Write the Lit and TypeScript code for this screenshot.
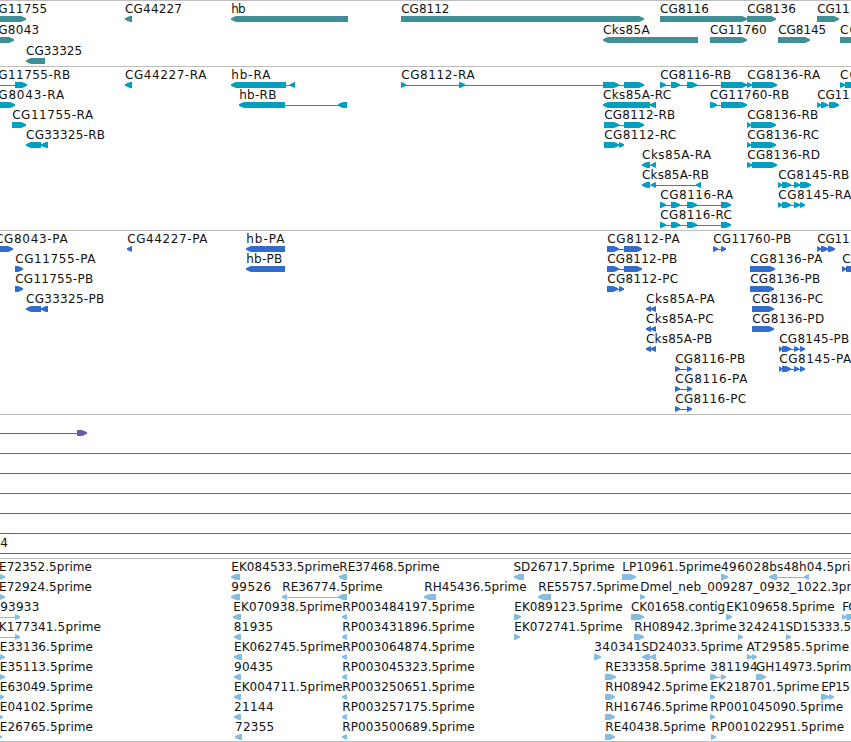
import { LitElement, html, svg, css } from 'lit';
import { customElement, property } from 'lit/decorators.js';

type Dir = 'L' | 'R';

// row, label, label left, label right, direction, blocks as [start, end] pairs
type Feature = [number, string, number, number, Dir, number[][]];

interface Track {
  name: string;
  height: number;
  pitch: number;
  features: Feature[];
}

const RP: number[][] = [[342, 347]];

const TRACKS: Track[] = [
  {
    name: 'gene',
    height: 66,
    pitch: 21,
    features: [
      [0, 'G11755', -1, 46.5, 'R', [[-5, 26]]],
      [1, 'G8043', -1, 38.5, 'R', [[-5, 14]]],
      [2, 'CG33325', 26.7, 81.5, 'L', [[26, 45]]],
      [0, 'CG44227', 125.7, 181.3, 'L', [[125, 132]]],
      [0, 'hb', 231.9, 245, 'L', [[231, 348]]],
      [0, 'CG8112', 401.9, 448.7, 'R', [[401, 644]]],
      [1, 'Cks85A', 603.7, 649, 'L', [[603, 698]]],
      [0, 'CG8116', 660.7, 708.3, 'R', [[660, 747]]],
      [1, 'CG11760', 710.7, 766, 'R', [[710, 747]]],
      [0, 'CG8136', 747.9, 795.3, 'R', [[747, 776]]],
      [1, 'CG8145', 778.9, 825.5, 'R', [[778, 810]]],
      [0, 'CG11', 817.9, 849, 'R', [[817, 839]]],
      [1, 'CG', 840.7, 858, 'R', [[840, 870]]],
    ],
  },
  {
    name: 'mrna',
    height: 164,
    pitch: 20,
    features: [
      [0, 'G11755-RB', -1, 69.5, 'R', [[-15, -8], [15, 27]]],
      [1, 'G8043-RA', -1, 63.5, 'R', [[-5, 15]]],
      [2, 'CG11755-RA', 12.9, 92.5, 'R', [[12, 26]]],
      [3, 'CG33325-RB', 26.7, 104.3, 'L', [[26, 41], [41, 48]]],
      [0, 'CG44227-RA', 125.7, 205.7, 'L', [[125, 132]]],
      [0, 'hb-RA', 231.9, 269.7, 'L', [[231, 286], [290, 295]]],
      [1, 'hb-RB', 239.9, 275.7, 'L', [[239, 285], [338, 347]]],
      [0, 'CG8112-RA', 401.9, 474, 'R', [[401, 406], [459, 465], [603, 619], [624, 644]]],
      [1, 'Cks85A-RC', 603.7, 670.5, 'L', [[603, 650], [650, 656]]],
      [2, 'CG8112-RB', 604.9, 674.5, 'R', [[604, 619], [624, 644]]],
      [3, 'CG8112-RC', 604.9, 675.5, 'R', [[604, 619], [619, 624]]],
      [4, 'Cks85A-RA', 642.7, 710.5, 'L', [[642, 650], [651, 656]]],
      [5, 'Cks85A-RB', 642.7, 708.3, 'L', [[642, 650], [651, 656], [696, 701]]],
      [0, 'CG8116-RB', 660.9, 730.5, 'R', [[660, 666], [671, 680], [687, 697], [721, 747]]],
      [6, 'CG8116-RA', 660.9, 732.5, 'R', [[660, 666], [671, 680], [687, 697], [721, 731]]],
      [7, 'CG8116-RC', 660.9, 731.3, 'R', [[660, 666], [671, 680], [687, 697], [721, 731]]],
      [1, 'CG11760-RB', 710.7, 788.5, 'R', [[710, 717], [721, 747]]],
      [0, 'CG8136-RA', 747.9, 819.5, 'R', [[747, 752], [752, 777]]],
      [2, 'CG8136-RB', 747.9, 817.5, 'R', [[747, 751], [751, 776]]],
      [3, 'CG8136-RC', 747.9, 818.5, 'R', [[747, 751], [751, 776]]],
      [4, 'CG8136-RD', 747.9, 819.3, 'R', [[747, 752], [752, 777]]],
      [5, 'CG8145-RB', 778.9, 848.5, 'R', [[778, 782], [782, 791], [794, 800], [800, 811]]],
      [6, 'CG8145-RA', 778.9, 850.7, 'R', [[778, 782], [782, 791], [794, 800], [800, 805]]],
      [1, 'CG11', 817.9, 849, 'R', [[817, 821], [821, 828], [829, 839]]],
      [0, 'CG', 840.7, 858, 'R', [[840, 845], [845, 870]]],
    ],
  },
  {
    name: 'cds',
    height: 184,
    pitch: 20,
    features: [
      [0, 'CG8043-PA', -4.3, 67, 'R', [[-5, 13]]],
      [1, 'CG11755-PA', 15.9, 94.7, 'R', [[15, 23]]],
      [2, 'CG11755-PB', 15.9, 92.5, 'R', [[15, 23]]],
      [3, 'CG33325-PB', 26.7, 103.5, 'L', [[26, 41], [41, 48]]],
      [0, 'CG44227-PA', 127.9, 206.7, 'L', [[127, 132]]],
      [0, 'hb-PA', 246.9, 283.7, 'L', [[246, 285]]],
      [1, 'hb-PB', 246.9, 281.5, 'L', [[246, 285]]],
      [0, 'CG8112-PA', 607.9, 679, 'R', [[607, 619], [624, 642]]],
      [1, 'CG8112-PB', 607.9, 676.5, 'R', [[607, 619], [624, 642]]],
      [2, 'CG8112-PC', 607.9, 677.5, 'R', [[607, 618], [619, 624]]],
      [3, 'Cks85A-PA', 646.7, 714, 'L', [[646, 651], [651, 656]]],
      [4, 'Cks85A-PC', 646.7, 713, 'L', [[646, 651], [651, 656]]],
      [5, 'Cks85A-PB', 646.7, 711.5, 'L', [[646, 651], [651, 656]]],
      [6, 'CG8116-PB', 675.9, 744.5, 'R', [[675, 680], [687, 692]]],
      [7, 'CG8116-PA', 675.9, 746.7, 'R', [[675, 680], [687, 692]]],
      [8, 'CG8116-PC', 675.9, 745.5, 'R', [[675, 680], [687, 692]]],
      [0, 'CG11760-PB', 713.9, 790.5, 'R', [[713, 718], [721, 726]]],
      [1, 'CG8136-PA', 750.9, 821.7, 'R', [[750, 775]]],
      [2, 'CG8136-PB', 750.9, 819.5, 'R', [[750, 774]]],
      [3, 'CG8136-PC', 752.9, 822.5, 'R', [[752, 774]]],
      [4, 'CG8136-PD', 752.9, 823.5, 'R', [[752, 774]]],
      [5, 'CG8145-PB', 779.9, 848.5, 'R', [[779, 782], [782, 791], [794, 799], [800, 805]]],
      [6, 'CG8145-PA', 779.9, 850.5, 'R', [[779, 782], [782, 791], [794, 799], [800, 805]]],
      [0, 'CG11', 817.9, 849, 'R', [[817, 821], [821, 828], [828, 835]]],
      [1, 'C', 842.9, 850, 'R', [[842, 846], [846, 870]]],
    ],
  },
  {
    name: 'span',
    height: 144,
    pitch: 20,
    features: [
      [0, '', 0, 0, 'R', [[-20, -10], [77, 87]]],
      [1, '', 0, 0, 'R', [[-20, -10], [870, 880]]],
      [2, '', 0, 0, 'R', [[-20, -10], [870, 880]]],
      [3, '', 0, 0, 'R', [[-20, -10], [870, 880]]],
      [4, '', 0, 0, 'R', [[-20, -10], [870, 880]]],
      [5, '', 0, 0, 'R', [[-20, -10], [870, 880]]],
      [6, '4', 0.9, 7, 'R', [[-20, -10], [870, 880]]],
    ],
  },
  {
    name: 'est',
    height: 184,
    pitch: 20,
    features: [
      [0, 'E72352.5prime', -0.3, 91.3, 'R', [[-5, 5]]],
      [1, 'E72924.5prime', -0.3, 91.3, 'R', [[-5, 5]]],
      [2, '93933', 0.9, 38.7, 'R', [[-15, -9], [15, 20]]],
      [3, 'K177341.5prime', -0.5, 100.3, 'R', [[-15, -9], [15, 20]]],
      [4, 'E33136.5prime', 0.5, 92.3, 'R', [[-5, 5]]],
      [5, 'E35113.5prime', 0.5, 92.3, 'R', [[-5, 5]]],
      [6, 'E63049.5prime', 0.5, 92.3, 'R', [[-5, 4]]],
      [7, 'E04102.5prime', 0.5, 92.3, 'R', [[-5, 3]]],
      [8, 'E26765.5prime', 0.5, 92.3, 'R', [[-5, 2]]],
      [0, 'EK084533.5prime', 232, 339, 'L', [[231, 240]]],
      [1, '99526', 231.9, 270.5, 'L', [[231, 240]]],
      [2, 'EK070938.5prime', 234, 341.5, 'L', [[233, 241]]],
      [3, '81935', 234.5, 272.5, 'L', [[234, 241]]],
      [4, 'EK062745.5prime', 234.7, 342, 'L', [[234, 242]]],
      [5, '90435', 234.7, 272.5, 'L', [[234, 241]]],
      [6, 'EK004711.5prime', 234.7, 342, 'L', [[234, 241]]],
      [7, '21144', 234.7, 273, 'L', [[234, 241]]],
      [8, '72355', 235.7, 273.5, 'L', [[235, 242]]],
      [1, 'RE36774.5prime', 283, 382, 'L', [[282, 287], [338, 347]]],
      [0, 'RE37468.5prime', 340, 439, 'L', [[339, 347]]],
      [2, 'RP003484197.5prime', 343, 474, 'L', RP],
      [3, 'RP003431896.5prime', 343, 474, 'L', RP],
      [4, 'RP003064874.5prime', 343, 474, 'L', RP],
      [5, 'RP003045323.5prime', 343, 474, 'L', RP],
      [6, 'RP003250651.5prime', 343, 474, 'L', RP],
      [7, 'RP003257175.5prime', 343, 474, 'L', RP],
      [8, 'RP003500689.5prime', 343, 474, 'L', RP],
      [1, 'RH45436.5prime', 425, 526, 'L', [[424, 436]]],
      [0, 'SD26717.5prime', 514.2, 614, 'L', [[514, 524]]],
      [1, 'RE55757.5prime', 539, 638, 'L', [[538, 551]]],
      [2, 'EK089123.5prime', 515, 622, 'R', [[514, 521]]],
      [3, 'EK072741.5prime', 515, 622, 'R', [[514, 520]]],
      [4, '340341', 595, 641, 'R', [[594, 601]]],
      [5, 'RE33358.5prime', 606, 705, 'R', [[605, 616]]],
      [6, 'RH08942.5prime', 606, 707.3, 'R', [[605, 615]]],
      [7, 'RH16746.5prime', 606, 707.3, 'R', [[605, 615]]],
      [8, 'RE40438.5prime', 606, 705, 'R', [[605, 615]]],
      [0, 'LP10961.5prime', 622.9, 720.5, 'R', [[622, 636]]],
      [1, 'Dmel_neb_009287_0932_1022.3pr', 641, 850.7, 'R', [[640, 645]]],
      [2, 'CK01658.contig', 631.7, 724.5, 'R', [[631, 644]]],
      [3, 'RH08942.3prime', 635, 736, 'R', [[634, 644]]],
      [4, 'SD24033.5prime', 642.2, 742.3, 'L', [[642, 650], [650, 656]]],
      [0, '496028', 721.7, 768.5, 'R', [[721, 728]]],
      [0, 'bs48h04.5pri', 770, 849.7, 'L', [[769, 777], [804, 809]]],
      [2, 'EK109658.5prime', 727, 834, 'R', [[726, 732]]],
      [2, 'FC', 843, 856, 'R', [[842, 846], [846, 870]]],
      [3, '324241', 738.7, 785, 'R', [[738, 743]]],
      [3, 'SD15333.5', 786.2, 850.5, 'R', [[786, 791]]],
      [4, 'AT29585.5prime', 747.2, 848.5, 'R', [[747, 752], [752, 757]]],
      [5, '381194', 710.9, 757, 'R', [[710, 717], [721, 726]]],
      [5, 'GH14973.5prim', 756.7, 850.7, 'R', [[756, 766]]],
      [6, 'EK218701.5prime', 711, 818.5, 'R', [[710, 715]]],
      [6, 'EP15', 822, 849.3, 'R', [[821, 829], [829, 834]]],
      [7, 'RP001045090.5prime', 711, 842.5, 'R', [[710, 715]]],
      [8, 'RP001022951.5prime', 712, 843.5, 'R', [[711, 716]]],
    ],
  },
];

@customElement('genome-track')
export class GenomeTrack extends LitElement {
  static styles = css`
    :host {
      display: block;
      box-sizing: border-box;
      border-top: 1px solid #bebebe;
      overflow: hidden;
    }
    svg {
      display: block;
      width: 100%;
    }
    text {
      font-family: 'DejaVu Sans', sans-serif;
      font-size: 12px;
      fill: #111;
    }
    .gene {
      fill: #408e96;
    }
    .mrna {
      fill: #009ec0;
    }
    .cds {
      fill: #326ccc;
    }
    .span {
      fill: #7058a8;
    }
    .est {
      fill: #86bcdf;
    }
  `;

  @property({ attribute: false }) track!: Track;

  private _block(start: number, end: number, dir: Dir, y: number) {
    const tip = Math.min(5, end - start);
    const head = dir === 'R' ? end : start;
    const tail = dir === 'R' ? start : end;
    const neck = dir === 'R' ? end - tip : start + tip;
    const mid = (head + neck) / 2;
    return svg`<polygon points="${tail},${y} ${neck},${y} ${mid},${y + 0.9} ${head},${y + 2.3} ${head},${y + 3.7} ${mid},${y + 5.1} ${neck},${y + 6} ${tail},${y + 6}" />`;
  }

  private _feature([row, label, left, right, dir, blocks]: Feature) {
    // the border takes the first pixel of the track
    const y = row * this.track.pitch - 1;
    const first = blocks[0][0];
    const last = blocks[blocks.length - 1][1];
    return svg`
      ${blocks.length > 1
        ? svg`<rect x=${first + 3} y=${y + 19} width=${last - first - 6} height="1" />`
        : ''}
      ${blocks.map(([start, end]) => this._block(start, end, dir, y + 16))}
      ${label
        ? svg`<text x=${left - 0.7} y=${y + 13} textLength=${right - left + 1.4} lengthAdjust="spacing">${label}</text>`
        : ''}
    `;
  }

  render() {
    return html`
      <svg class=${this.track.name} height=${this.track.height - 1}>
        ${this.track.features.map((f) => this._feature(f))}
      </svg>
    `;
  }
}

@customElement('app-root')
export class AppRoot extends LitElement {
  static styles = css`
    :host {
      display: block;
      height: 742px;
      overflow: hidden;
      background: #fff;
    }
    .tracks {
      display: flex;
      flex-direction: column;
      height: 741px;
      overflow: hidden;
      border-bottom: 1px solid #bebebe;
    }
    genome-track {
      flex: none;
    }
  `;

  render() {
    return html`
      <div class="tracks">
        ${TRACKS.map((t) => html`<genome-track .track=${t}></genome-track>`)}
      </div>
    `;
  }
}
